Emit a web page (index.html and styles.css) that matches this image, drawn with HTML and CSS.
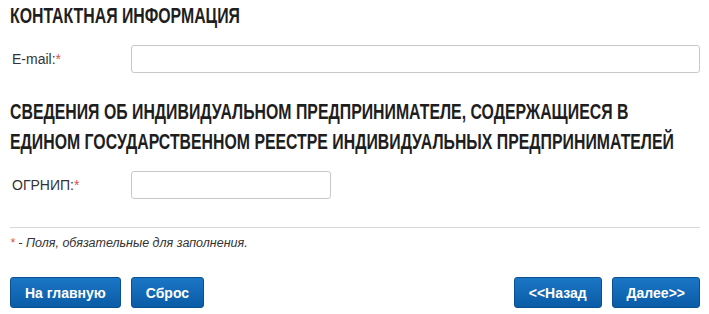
FILE: index.html
```html
<!DOCTYPE html>
<html lang="ru">

<head>
    <meta charset="UTF-8">
    <title>Контактная информация</title>
    <link rel="stylesheet" href="styles.css">
</head>

<body>
    <div class="form">
        <h2><span class="line">Контактная информация</span></h2>
        <div class="row">
            <label for="email">E-mail:<span class="req">*</span></label>
            <input type="text" id="email" class="in wide">
        </div>

        <h2 class="ip">
            <span class="line">Сведения об индивидуальном предпринимателе, содержащиеся в</span>
            <span class="line">едином государственном реестре индивидуальных предпринимателей</span>
        </h2>
        <div class="row">
            <label for="ogrnip">ОГРНИП:<span class="req">*</span></label>
            <input type="text" id="ogrnip" class="in short">
        </div>

        <hr>
        <p class="note"><span class="req">*</span> - Поля, обязательные для заполнения.</p>

        <div class="buttons">
            <div class="group">
                <button>На главную</button>
                <button>Сброс</button>
            </div>
            <div class="group">
                <button>&lt;&lt;Назад</button>
                <button>Далее&gt;&gt;</button>
            </div>
        </div>
    </div>
</body>

</html>
```

FILE: styles.css
```css
body {
    margin: 0;
    font-family: "Liberation Sans", Arial, sans-serif;
    background: #fff;
    color: #333;
}

.form {
    padding: 0 9px 0 10px;
}

h2 {
    font-family: "Liberation Sans", Arial, sans-serif;
    font-weight: bold;
    font-size: 22px;
    line-height: 30px;
    text-transform: uppercase;
    color: #1e1e1e;
    margin: 1px 0 0 0;
}

/* заголовки узкие, как в DIN Condensed */
h2 .line {
    display: block;
    white-space: nowrap;
    transform: scaleX(0.72);
    transform-origin: 0 0;
}

h2.ip {
    margin-top: 24px;
}

.row {
    display: flex;
    align-items: center;
    margin-top: 14px;
}

.row label {
    width: 121px;
    box-sizing: border-box;
    padding-left: 2px;
    font-size: 14px;
    color: #333;
}

.req {
    color: #d9534f;
}

.in {
    height: 28px;
    box-sizing: border-box;
    border: 1px solid #c8c8c8;
    border-radius: 3px;
    font-size: 13px;
    padding: 4px 6px;
}

.wide {
    flex: 1;
}

.short {
    width: 200px;
}

hr {
    border: 0;
    border-top: 1px solid #d8d8d8;
    margin: 28px 0 0 0;
}

.note {
    font-size: 12.5px;
    line-height: 14px;
    font-style: italic;
    color: #333;
    margin: 8px 0 0 0;
}

.buttons {
    display: flex;
    justify-content: space-between;
    margin-top: 27px;
}

.group {
    display: flex;
    gap: 10px;
}

.buttons button {
    height: 31px;
    padding: 0 14px;
    font-family: "Liberation Sans", Arial, sans-serif;
    font-size: 14px;
    font-weight: bold;
    color: #fff;
    background: linear-gradient(#1b76c6, #0a5ca6);
    border: 1px solid #0a4f8f;
    border-radius: 3px;
    cursor: pointer;
}
```
